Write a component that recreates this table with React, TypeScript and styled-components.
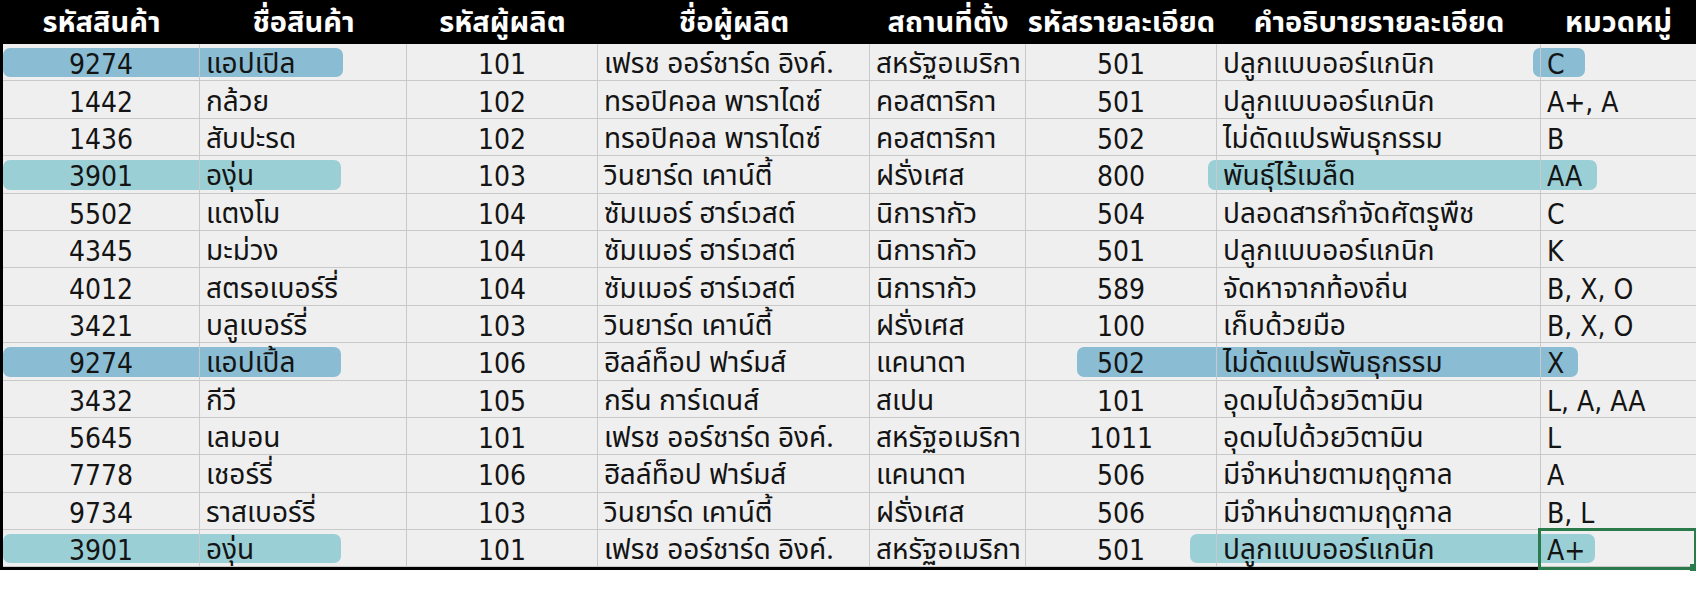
import React from "react";
import styled, { createGlobalStyle, css } from "styled-components";

const GlobalStyle = createGlobalStyle`
  html, body { margin: 0; padding: 0; background: #ffffff; }
  body { width: 1696px; height: 608px; overflow: hidden; }
`;

const COLS = "197px 207px 191px 272px 156px 191px 324px 155px";
const THAI = `"Noto Sans Thai", "Noto Sans", "Liberation Sans", sans-serif`;
const NUM = `"DejaVu Sans Condensed", "DejaVu Sans", "Noto Sans", sans-serif`;

const Sheet = styled.div`
  width: 1696px;
  box-sizing: border-box;
  border-left: 3px solid #000;
  border-bottom: 3px solid #000;
  font-family: ${THAI};
`;

const HeaderRow = styled.div`
  display: grid;
  grid-template-columns: ${COLS};
  grid-template-rows: 44px;
  height: 44px;
  background: #000;
  margin-left: -3px;
  padding-left: 3px;
`;

const HeadCell = styled.div`
  display: flex;
  align-items: center;
  justify-content: center;
  min-height: 0;
  padding-top: 3px;
  box-sizing: border-box;
  color: #fff;
  font-weight: 700;
  font-size: 29px;
  line-height: 1;
  white-space: nowrap;
`;

const Row = styled.div`
  position: relative;
  display: grid;
  grid-template-columns: ${COLS};
  grid-template-rows: 37.4px;
  height: 37.4px;
  background: #efefef;
`;

type Kind = "num" | "text" | "code";

const Cell = styled.div<{ $kind: Kind; $last?: boolean }>`
  position: relative;
  z-index: 1;
  display: flex;
  align-items: center;
  min-height: 0;
  padding-top: 6px;
  box-sizing: border-box;
  border-right: ${(p) => (p.$last ? "none" : "1px solid #c9c9c9")};
  border-bottom: 1px solid #c9c9c9;
  color: #141414;
  white-space: nowrap;
  line-height: 1;
  ${(p) =>
    p.$kind === "num"
      ? css`
          justify-content: center;
          font-family: ${NUM};
          font-stretch: condensed;
          font-size: 28px;
        `
      : p.$kind === "code"
      ? css`
          justify-content: flex-start;
          padding-left: 6px;
          font-family: ${NUM};
          font-stretch: condensed;
          font-size: 28px;
        `
      : css`
          justify-content: flex-start;
          padding-left: 6px;
          font-size: 28px;
        `}
`;

const Highlight = styled.div<{ $left: number; $right: number; $tone: "blue" | "teal" }>`
  position: absolute;
  z-index: 0;
  top: 4px;
  bottom: 4px;
  left: ${(p) => p.$left}px;
  width: ${(p) => p.$right - p.$left}px;
  border-radius: 7px;
  background: ${(p) => (p.$tone === "blue" ? "#8abdd3" : "#9bcfd6")};
`;

const Selection = styled.div`
  position: absolute;
  z-index: 2;
  left: 1535px;
  right: -1px;
  top: -2px;
  bottom: -3px;
  border: 3px solid #2a7a4b;
  pointer-events: none;
  &::after {
    content: "";
    position: absolute;
    right: -3px;
    bottom: -4px;
    width: 7px;
    height: 7px;
    background: #2a7a4b;
  }
`;

const headers = [
  "รหัสสินค้า",
  "ชื่อสินค้า",
  "รหัสผู้ผลิต",
  "ชื่อผู้ผลิต",
  "สถานที่ตั้ง",
  "รหัสรายละเอียด",
  "คำอธิบายรายละเอียด",
  "หมวดหมู่",
];

const kinds: Kind[] = ["num", "text", "num", "text", "text", "num", "text", "code"];

type HL = { left: number; right: number; tone: "blue" | "teal" };

const rows: { cells: string[]; hl?: HL[]; selected?: boolean }[] = [
  {
    cells: ["9274", "แอปเปิล", "101", "เฟรช ออร์ชาร์ด อิงค์.", "สหรัฐอเมริกา", "501", "ปลูกแบบออร์แกนิก", "C"],
    hl: [
      { left: 0, right: 340, tone: "blue" },
      { left: 1530, right: 1582, tone: "blue" },
    ],
  },
  { cells: ["1442", "กล้วย", "102", "ทรอปิคอล พาราไดซ์", "คอสตาริกา", "501", "ปลูกแบบออร์แกนิก", "A+, A"] },
  { cells: ["1436", "สับปะรด", "102", "ทรอปิคอล พาราไดซ์", "คอสตาริกา", "502", "ไม่ดัดแปรพันธุกรรม", "B"] },
  {
    cells: ["3901", "องุ่น", "103", "วินยาร์ด เคาน์ตี้", "ฝรั่งเศส", "800", "พันธุ์ไร้เมล็ด", "AA"],
    hl: [
      { left: 0, right: 338, tone: "teal" },
      { left: 1205, right: 1594, tone: "teal" },
    ],
  },
  { cells: ["5502", "แตงโม", "104", "ซัมเมอร์ ฮาร์เวสต์", "นิการากัว", "504", "ปลอดสารกำจัดศัตรูพืช", "C"] },
  { cells: ["4345", "มะม่วง", "104", "ซัมเมอร์ ฮาร์เวสต์", "นิการากัว", "501", "ปลูกแบบออร์แกนิก", "K"] },
  { cells: ["4012", "สตรอเบอร์รี่", "104", "ซัมเมอร์ ฮาร์เวสต์", "นิการากัว", "589", "จัดหาจากท้องถิ่น", "B, X, O"] },
  { cells: ["3421", "บลูเบอร์รี่", "103", "วินยาร์ด เคาน์ตี้", "ฝรั่งเศส", "100", "เก็บด้วยมือ", "B, X, O"] },
  {
    cells: ["9274", "แอปเปิ้ล", "106", "ฮิลล์ท็อป ฟาร์มส์", "แคนาดา", "502", "ไม่ดัดแปรพันธุกรรม", "X"],
    hl: [
      { left: 0, right: 338, tone: "blue" },
      { left: 1074, right: 1575, tone: "blue" },
    ],
  },
  { cells: ["3432", "กีวี", "105", "กรีน การ์เดนส์", "สเปน", "101", "อุดมไปด้วยวิตามิน", "L, A, AA"] },
  { cells: ["5645", "เลมอน", "101", "เฟรช ออร์ชาร์ด อิงค์.", "สหรัฐอเมริกา", "1011", "อุดมไปด้วยวิตามิน", "L"] },
  { cells: ["7778", "เชอร์รี่", "106", "ฮิลล์ท็อป ฟาร์มส์", "แคนาดา", "506", "มีจำหน่ายตามฤดูกาล", "A"] },
  { cells: ["9734", "ราสเบอร์รี่", "103", "วินยาร์ด เคาน์ตี้", "ฝรั่งเศส", "506", "มีจำหน่ายตามฤดูกาล", "B, L"] },
  {
    cells: ["3901", "องุ่น", "101", "เฟรช ออร์ชาร์ด อิงค์.", "สหรัฐอเมริกา", "501", "ปลูกแบบออร์แกนิก", "A+"],
    hl: [
      { left: 0, right: 338, tone: "teal" },
      { left: 1187, right: 1592, tone: "teal" },
    ],
    selected: true,
  },
];

export default function App() {
  return (
    <>
      <GlobalStyle />
      <Sheet>
        <HeaderRow>
          {headers.map((h) => (
            <HeadCell key={h}>{h}</HeadCell>
          ))}
        </HeaderRow>
        {rows.map((r, i) => (
          <Row key={i}>
            {r.hl?.map((h, j) => (
              <Highlight key={j} $left={h.left} $right={h.right} $tone={h.tone} />
            ))}
            {r.cells.map((c, k) => (
              <Cell key={k} $kind={kinds[k]} $last={k === 7}>
                {c}
              </Cell>
            ))}
            {r.selected && <Selection />}
          </Row>
        ))}
      </Sheet>
    </>
  );
}
